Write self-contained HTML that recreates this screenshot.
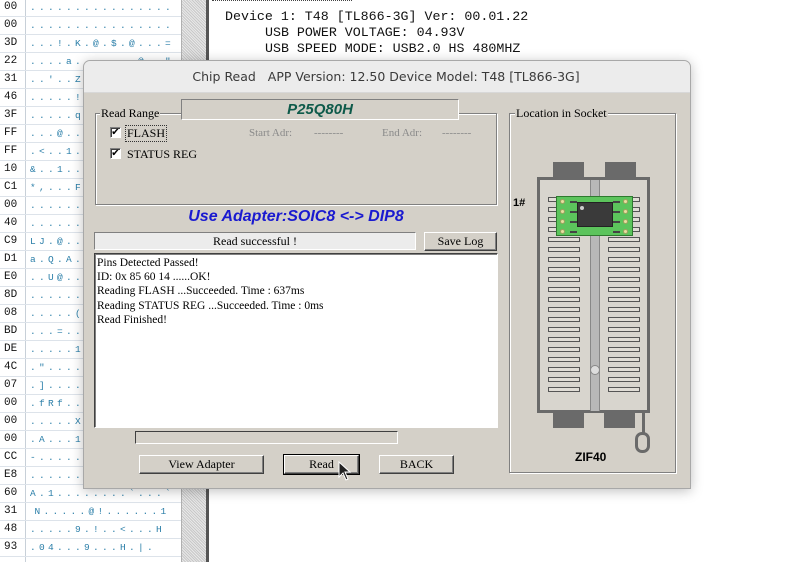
<!DOCTYPE html>
<html><head><meta charset="utf-8"><style>
*{margin:0;padding:0;box-sizing:border-box}
body{width:789px;height:562px;overflow:hidden;background:#fff;position:relative;font-family:"Liberation Serif",serif;font-size:11px}
.a{position:absolute}
.hx{position:absolute;left:0;width:181px;height:18px;border-bottom:1px solid #dde3ea;font-family:"Liberation Mono",monospace;font-size:11px;overflow:hidden}
.hx b{position:absolute;left:4px;top:2px;font-weight:normal;color:#111}
.hx i{position:absolute;left:30px;top:3px;font-style:normal;color:#2a7ea8;font-size:9.5px;letter-spacing:-1.2px;white-space:pre}
.mono{font-family:"Liberation Mono",monospace;font-size:13.3px;color:#111;white-space:pre}
.btn{position:absolute;background:#d4d0c8;border:1px solid;border-color:#fff #404040 #404040 #fff;box-shadow:inset -1px -1px #808080;text-align:center;font-size:12px;color:#000}
.grp{position:absolute;border:1px solid #808080;box-shadow:1px 1px #fff, inset 1px 1px #fff}
.lbl{position:absolute;background:#d4d0c8;font-size:12px;padding:0 1px}
.cb{position:absolute;width:11px;height:11px;background:#fff;border:1px solid;border-color:#808080 #fff #fff #808080;box-shadow:inset 1px 1px #404040;font-size:10px;line-height:9px;text-align:center;font-family:"DejaVu Sans",sans-serif;font-weight:bold}
.slot{position:absolute;width:32px;height:5px;border:1px solid #555;background:#e0ddd6}
</style></head><body>
<div class="a" style="left:25px;top:0;width:1px;height:562px;background:#c8d0d8"></div>
<div id="hex"></div>
<div class="a" style="left:181px;top:0;width:25px;height:562px;background:repeating-linear-gradient(45deg,#c8c8c8 0 1px,#e8e8e8 1px 2px);border-left:1px solid #b0b0b0"></div>
<div class="a" style="left:206px;top:0;width:3px;height:562px;background:#555"></div>
<div class="a" style="left:209px;top:0;width:580px;height:562px;background:#fff"></div>
<div class="a" style="left:212px;top:0;width:140px;height:1px;border-top:1px dotted #444"></div>
<div class="a mono" style="left:225px;top:9px">Device 1: T48 [TL866-3G] Ver: 00.01.22</div>
<div class="a mono" style="left:265px;top:25px">USB POWER VOLTAGE: 04.93V</div>
<div class="a mono" style="left:265px;top:41px">USB SPEED MODE: USB2.0 HS 480MHZ</div>

<div class="a" style="left:83px;top:60px;width:608px;height:429px;background:#d4d0c8;border:1px solid #a8a8a8;border-radius:7px 7px 0 0;box-shadow:0 2px 12px rgba(0,0,0,.25);overflow:hidden">
 <div class="a" style="left:0;top:0;width:608px;height:32px;background:#ececec;border-bottom:1px solid #d8d8d8;font-family:'DejaVu Sans',sans-serif;font-size:12.5px;color:#3a3a3a;line-height:32px;text-align:center;padding-right:4px">Chip Read&nbsp;&nbsp;&nbsp;APP Version: 12.50 Device Model: T48 [TL866-3G]</div>
</div>
<div class="grp" style="left:95px;top:113px;width:402px;height:92px"></div>
<div class="lbl" style="left:100px;top:106px">Read Range</div>
<div class="a" style="left:181px;top:99px;width:278px;height:21px;background:#d4d0c8;border:1px solid;border-color:#808080 #fff #fff #808080;text-align:center;font-family:'Liberation Sans',sans-serif;font-weight:bold;font-style:italic;font-size:15px;color:#0e5a4a;line-height:19px">P25Q80H</div>
<div class="cb" style="left:110px;top:127px">✔</div>
<div class="a" style="left:126px;top:126px;font-size:12px;outline:1px dotted #333;padding:0 1px">FLASH</div>
<div class="cb" style="left:110px;top:148px">✔</div>
<div class="a" style="left:127px;top:147px;font-size:12px">STATUS REG</div>
<div class="a" style="left:249px;top:127px;font-size:11px;color:#8a8a8a">Start Adr:</div>
<div class="a" style="left:314px;top:127px;font-size:11px;color:#8a8a8a">--------</div>
<div class="a" style="left:382px;top:127px;font-size:11px;color:#8a8a8a">End Adr:</div>
<div class="a" style="left:442px;top:127px;font-size:11px;color:#8a8a8a">--------</div>
<div class="a" style="left:95px;top:208px;width:402px;text-align:center;font-family:'Liberation Sans',sans-serif;font-weight:bold;font-style:italic;font-size:16px;color:#1a1ad0">Use Adapter:SOIC8 &lt;-&gt; DIP8</div>
<div class="a" style="left:94px;top:232px;width:322px;height:18px;background:#ececec;border:1px solid;border-color:#808080 #fff #fff #808080;text-align:center;font-size:12px;line-height:16px">Read successful !</div>
<div class="btn" style="left:424px;top:232px;width:73px;height:19px;line-height:17px">Save Log</div>
<div class="a" style="left:94px;top:253px;width:404px;height:175px;background:#fff;border:1px solid;border-color:#404040 #fff #fff #404040;box-shadow:inset 1px 1px #808080;font-size:11.5px;line-height:14.2px;padding:2px 0 0 2px;color:#000">Pins Detected Passed!<br>ID: 0x 85 60 14 ......OK!<br>Reading FLASH ...Succeeded. Time : 637ms<br>Reading STATUS REG ...Succeeded. Time : 0ms<br>Read Finished!</div>
<div class="a" style="left:135px;top:431px;width:263px;height:13px;border:1px solid;border-color:#404040 #fff #fff #404040;background:#d4d0c8"></div>
<div class="btn" style="left:139px;top:455px;width:125px;height:19px;line-height:17px">View Adapter</div>
<div class="btn" style="left:284px;top:455px;width:75px;height:19px;line-height:17px;outline:1px solid #000">Read</div>
<div class="btn" style="left:379px;top:455px;width:75px;height:19px;line-height:17px">BACK</div>
<svg class="a" style="left:338px;top:461px" width="14" height="22" viewBox="0 0 14 22"><path d="M1 1 L1 16 L5 12 L8 19 L10 18 L7 11 L12 11 Z" fill="#222" stroke="#fff" stroke-width="1"/></svg>
<div class="grp" style="left:509px;top:113px;width:167px;height:360px"></div>
<div class="lbl" style="left:515px;top:106px">Location in Socket</div>
<div class="a" style="left:513px;top:197px;font-family:'Liberation Sans',sans-serif;font-weight:bold;font-size:11px">1#</div>
<div class="a" style="left:553px;top:162px;width:31px;height:16px;background:#6a6a6a"></div>
<div class="a" style="left:605px;top:162px;width:31px;height:16px;background:#6a6a6a"></div>
<div class="a" style="left:553px;top:412px;width:31px;height:16px;background:#6a6a6a"></div>
<div class="a" style="left:604px;top:412px;width:31px;height:16px;background:#6a6a6a"></div>
<div class="a" style="left:537px;top:177px;width:113px;height:236px;border:3px solid #6a6a6a;background:#d8d5ce"></div>
<div class="a" style="left:590px;top:180px;width:10px;height:231px;background:#b8b8b8;border-left:1px solid #888;border-right:1px solid #888"></div>
<div class="a" style="left:590px;top:365px;width:10px;height:10px;border-radius:50%;background:#ddd;border:1px solid #888"></div>
<div id="slots"></div>
<div class="a" style="left:556px;top:196px;width:77px;height:40px;background:#5cc45c;border:1px solid #2e7a2e"></div>
<div class="a" style="left:577px;top:202px;width:36px;height:25px;background:#3a3a3a;border:1px solid #222"></div>
<div class="a" style="left:580px;top:206px;width:4px;height:4px;border-radius:50%;background:#ccc"></div>
<div id="dots"></div>
<div class="a" style="left:642px;top:413px;width:3px;height:20px;background:#6a6a6a"></div>
<div class="a" style="left:635px;top:432px;width:15px;height:21px;border:3px solid #6a6a6a;border-radius:7px"></div>
<div class="a" style="left:575px;top:450px;font-family:'Liberation Sans',sans-serif;font-weight:bold;font-size:12px">ZIF40</div>
<script>
var r=["00","00","3D","22","31","46","3F","FF","FF","10","C1","00","40","C9","D1","E0","8D","08","BD","DE","4C","07","00","00","00","CC","E8","60","31","48","93"];
var t=[". . . . . . . . . . . . . . . .",". . . . . . . . . . . . . . . .",". . . ! . K . @ . $ . @ . . . =",". . . . a . . . . . . . @ . . \"",". . ' . . Z",". . . . . !",". . . . . q",". . . @ . .",". < . . 1 .","& . . 1 . .","* , . . . F",". . . . . .",". . . . . .","L J . @ . .","a . Q . A .",". . U @ . .",". . . . . .",". . . . . (",". . . = . .",". . . . . 1",". \" . . . .",". ] . . . .",". f R f . .",". . . . . X",". A . . . 1","- . . . . .",". . . . . .","A . 1 . . . . . . . . ` . . . `"," N . . . . . @ ! . . . . . . 1",". . . . . 9 . ! . . < . . . H",". 0 4 . . . 9 . . . H . | ."];
var h="";for(var i=0;i<r.length;i++)h+='<div class="hx" style="top:'+(i*18-1)+'px"><b>'+r[i]+'</b><i>'+t[i]+'</i></div>';
document.getElementById("hex").innerHTML=h;
var s="";for(var i=0;i<20;i++){var y=197+i*10;s+='<div class="slot" style="left:548px;top:'+y+'px"></div><div class="slot" style="left:608px;top:'+y+'px"></div>';}
document.getElementById("slots").innerHTML=s;
var d="";for(var i=0;i<4;i++){var y=199+i*10;d+='<div class="a" style="left:560px;top:'+y+'px;width:5px;height:5px;border-radius:50%;background:#e8e0a0;border:1px solid #a0a060"></div><div class="a" style="left:623px;top:'+y+'px;width:5px;height:5px;border-radius:50%;background:#e8e0a0;border:1px solid #a0a060"></div><div class="a" style="left:570px;top:'+(y+2)+'px;width:7px;height:2px;background:#444"></div><div class="a" style="left:613px;top:'+(y+2)+'px;width:7px;height:2px;background:#444"></div>';}
document.getElementById("dots").innerHTML=d;
</script>
</body></html>
